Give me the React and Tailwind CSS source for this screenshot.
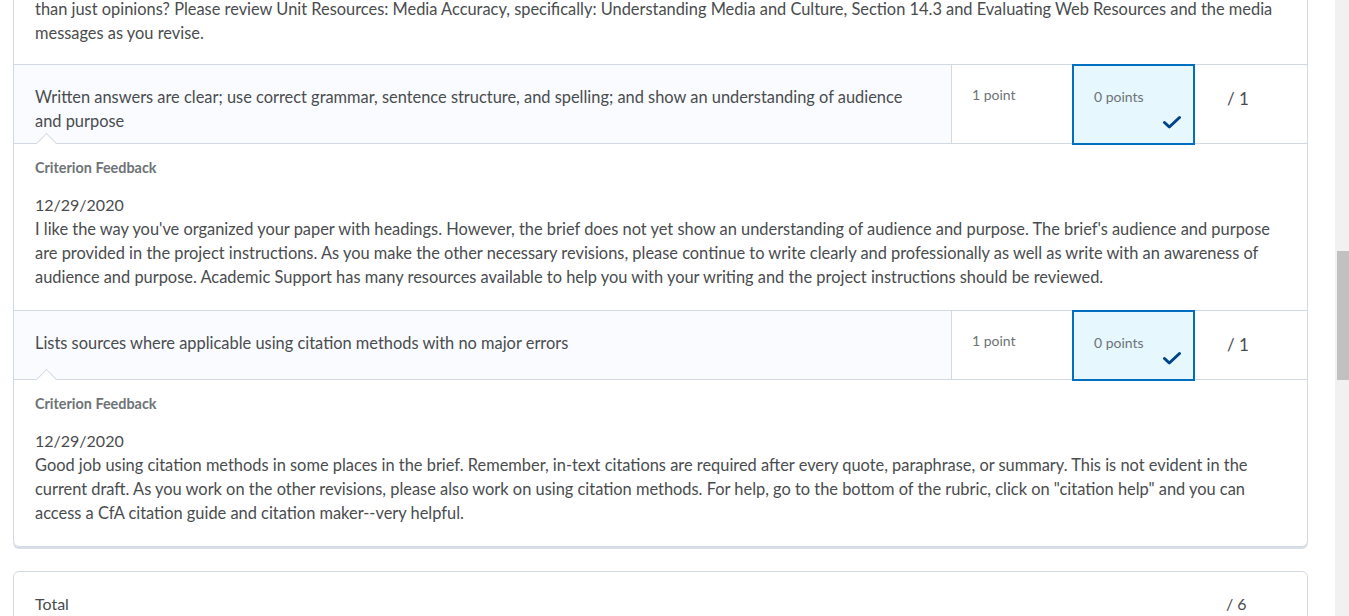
import React from 'react';

const criteria = [
  {
    id: 'writing',
    text: 'Written answers are clear; use correct grammar, sentence structure, and spelling; and show an understanding of audience and purpose',
    date: '12/29/2020',
    feedback:
      "I like the way you've organized your paper with headings. However, the brief does not yet show an understanding of audience and purpose. The brief's audience and purpose are provided in the project instructions. As you make the other necessary revisions, please continue to write clearly and professionally as well as write with an awareness of audience and purpose. Academic Support has many resources available to help you with your writing and the project instructions should be reviewed.",
  },
  {
    id: 'citations',
    text: 'Lists sources where applicable using citation methods with no major errors',
    date: '12/29/2020',
    feedback:
      'Good job using citation methods in some places in the brief. Remember, in-text citations are required after every quote, paraphrase, or summary. This is not evident in the current draft. As you work on the other revisions, please also work on using citation methods. For help, go to the bottom of the rubric, click on "citation help" and you can access a CfA citation guide and citation maker--very helpful.',
  },
];

function Check() {
  return (
    <svg width="20" height="14" viewBox="0 0 20 14" fill="none">
      <path d="M2.5 7.5L7.3 12L17.5 2.5" stroke="#004489" strokeWidth="3" strokeLinecap="round" strokeLinejoin="round" />
    </svg>
  );
}

function Feedback({ date, children }) {
  return (
    <div className="border-t border-[#d3d9e3] px-[21px] pt-[14px] pb-[21px]">
      <div className="text-[14.4px] leading-[20px] font-bold text-[#6e7376]">Criterion Feedback</div>
      <div className="mt-[15px] text-[16px] leading-[24px]">{date}</div>
      <p className="text-[16.4px] leading-[24px]">{children}</p>
    </div>
  );
}

function CriterionRow({ text }) {
  return (
    <div className="flex border-t border-[#d3d9e3]">
      <div className="relative w-[938px] shrink-0 min-h-[68px] bg-[#f9fbff] border-r border-[#d3d9e3] px-[21px] pt-[20px] pb-[10px] text-[16.4px] leading-[24px]">
        {text}
        {/* pointer into the feedback block below */}
        <div className="absolute left-[25px] bottom-[-8px] w-[15px] h-[15px] rotate-45 bg-white border-l border-t border-[#d3d9e3] z-10" />
      </div>
      <div className="w-[120px] shrink-0 pl-[20px] pt-[20px] text-[14px] leading-[20px] text-[#6e7376]">1 point</div>
      <div className="relative w-[123px] shrink-0">
        <div className="absolute left-0 right-0 top-[-1px] bottom-[-2px] z-10 border-2 border-[#006fbf] bg-[#e6f7fe] pl-[20px] pt-[21px] text-[14px] leading-[20px] text-[#6e7376]">
          0 points
          <div className="absolute right-[11px] bottom-[14px]">
            <Check />
          </div>
        </div>
      </div>
      <div className="flex-1 pl-[32px] pt-[22px] text-[17px] leading-[24px]">/ 1</div>
    </div>
  );
}

export default function App() {
  return (
    <div className="h-[616px] overflow-hidden flex bg-white text-[#494c4e] font-['Lato','Liberation_Sans',sans-serif]">
      <div className="flex-1 pl-[13px] pr-[27px]">
        <div className="border-x border-b border-[#d3d9e3] rounded-b-[6px] shadow-[0_2px_0_0_#d9dee6]">
          <div className="-mt-[3px] px-[21px] pb-[19px] text-[16.4px] leading-[24px]">
            than just opinions? Please review Unit Resources: Media Accuracy, specifically: Understanding Media and Culture, Section 14.3 and Evaluating Web Resources and the media messages as you revise.
          </div>
          {criteria.map((c) => (
            <div key={c.id}>
              <CriterionRow text={c.text} />
              <Feedback date={c.date}>{c.feedback}</Feedback>
            </div>
          ))}
        </div>

        <div className="mt-[24px] border border-[#d3d9e3] rounded-[6px] flex pt-[20px] pb-[20px] text-[16px] leading-[24px]">
          <div className="w-[1180px] px-[21px]">Total</div>
          <div className="pl-[32px]">/ 6</div>
        </div>
      </div>

      {/* scrollbar */}
      <div className="w-[14px] shrink-0 bg-[#f1f1f1]">
        <div className="ml-[2px] mt-[251px] h-[129px] bg-[#c1c1c1]" />
      </div>
    </div>
  );
}
